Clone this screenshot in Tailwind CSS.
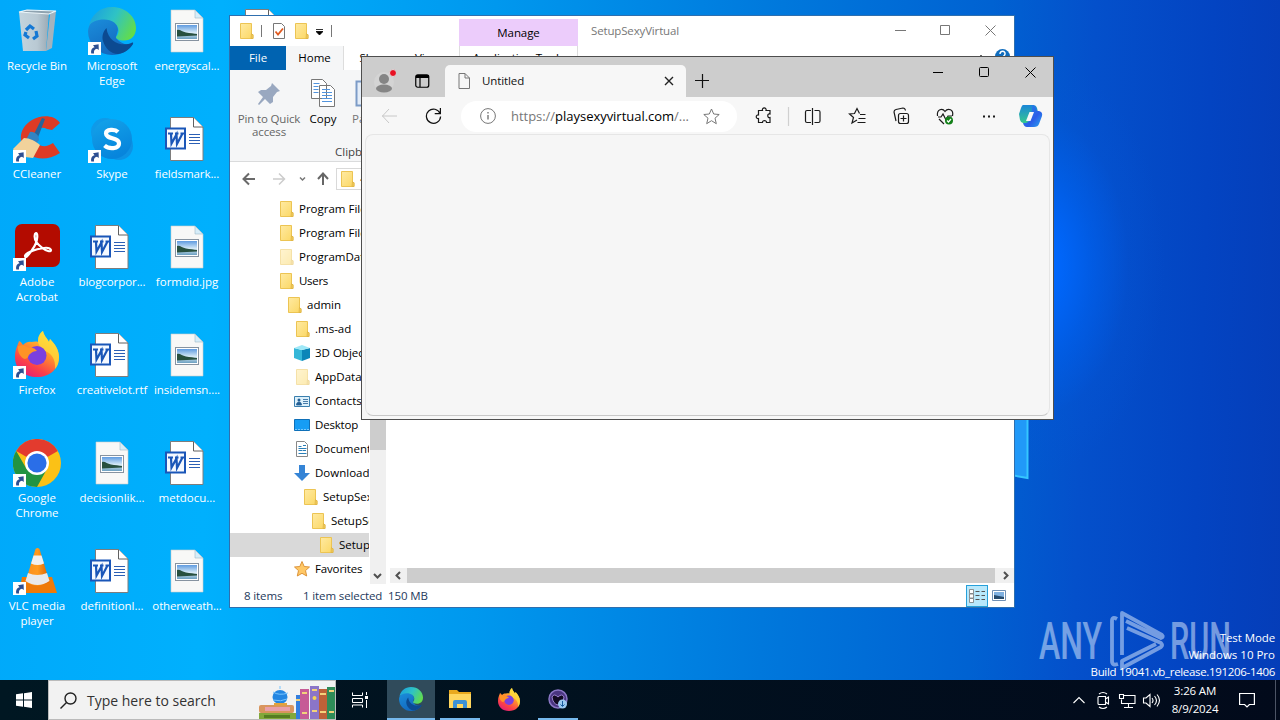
<!doctype html>
<html lang="en">
    <head>
        <meta charset="utf-8" />
        <script src="https://cdn.jsdelivr.net/npm/@tailwindcss/browser@4"></script>
        <title>Desktop</title>
    </head>

    <body class="w-[1280px] h-[720px] overflow-hidden font-['Open_Sans','Noto_Sans',sans-serif] text-[11.5px] text-black">
        <!-- shared icons -->
        <svg class="absolute w-0 h-0">
            <defs>
                <linearGradient id="gFolder" x1="0" y1="0" x2="1" y2="1">
                    <stop offset="0" stop-color="#ffeaa2" />
                    <stop offset="1" stop-color="#fbd763" />
                </linearGradient>
                <linearGradient id="gPhoto" x1="0" y1="0" x2="0" y2="1">
                    <stop offset="0" stop-color="#5f9be0" />
                    <stop offset="0.55" stop-color="#d8ebf7" />
                    <stop offset="1" stop-color="#6b9fc0" />
                </linearGradient>
                <linearGradient id="gEdgeTop" x1="0" y1="0.2" x2="1" y2="0.6">
                    <stop offset="0" stop-color="#1aa0e0" />
                    <stop offset="0.5" stop-color="#2fc3c4" />
                    <stop offset="1" stop-color="#62dc4c" />
                </linearGradient>
                <linearGradient id="gEdgeLeft" x1="0" y1="0" x2="0.6" y2="1">
                    <stop offset="0" stop-color="#1b8fdc" />
                    <stop offset="1" stop-color="#1266bd" />
                </linearGradient>
                <linearGradient id="gFox" x1="0.8" y1="0" x2="0.25" y2="1">
                    <stop offset="0" stop-color="#fff04a" />
                    <stop offset="0.4" stop-color="#ff9a2a" />
                    <stop offset="0.75" stop-color="#fb4148" />
                    <stop offset="1" stop-color="#e21d79" />
                </linearGradient>
                <linearGradient id="gSkype" x1="0" y1="0" x2="0.4" y2="1">
                    <stop offset="0" stop-color="#14a4ea" />
                    <stop offset="1" stop-color="#0785dc" />
                </linearGradient>
                <linearGradient id="gCone" x1="0" y1="0" x2="1" y2="0">
                    <stop offset="0" stop-color="#f98d1c" />
                    <stop offset="0.5" stop-color="#ff9a1e" />
                    <stop offset="1" stop-color="#d95f00" />
                </linearGradient>
                <linearGradient id="gBin" x1="0" y1="0" x2="1" y2="0">
                    <stop offset="0" stop-color="#c3d4de" />
                    <stop offset="0.6" stop-color="#b9c9d3" />
                    <stop offset="1" stop-color="#9aa9b4" />
                </linearGradient>
                <linearGradient id="gCop" x1="0" y1="0" x2="1" y2="1">
                    <stop offset="0" stop-color="#1f8fe8" />
                    <stop offset="0.6" stop-color="#2b5de8" />
                    <stop offset="1" stop-color="#2aa8f0" />
                </linearGradient>
                <linearGradient id="gCop2" x1="0" y1="0" x2="0" y2="1">
                    <stop offset="0" stop-color="#1a86d8" />
                    <stop offset="1" stop-color="#35c98f" />
                </linearGradient>
            </defs>
            <symbol id="folder" viewBox="0 0 14 16">
                <path d="M.5.500h11v11l1.500 0v4H.500z" fill="url(#gFolder)" stroke="#ecc453" />
                <path d="M11 15.500l.500-5 1.500 1.500v3.500z" fill="#f3cd5c" stroke="#dcb244" stroke-width=".7" />
            </symbol>
            <symbol id="shortcut" viewBox="0 0 13 13">
                <rect width="13" height="13" fill="#fff" />
                <path d="M3.300 11.500C2.600 8 4 5.700 6.600 5.200L5 3.200l5.600-.9.200 5.800-1.800-1.300C6.500 7.300 5.700 8.700 6 11.500z" fill="#2d4f92" />
            </symbol>
            <symbol id="photo" viewBox="0 0 48 48">
                <path d="M8 3h24l8 8v34H8z" fill="#f8f8f7" stroke="#c9cccd" stroke-width=".6" />
                <path d="M32 3v8h8z" fill="#d6edf9" stroke="#9fb8c6" stroke-width=".6" />
                <rect x="12.500" y="16.500" width="23" height="17" fill="#fff" stroke="#8793a0" />
                <rect x="14" y="18" width="20" height="14" fill="url(#gPhoto)" />
                <path d="M14 23c3-1 5 2 9 2.500s8 1 11 1.500v1.500l-20 1z" fill="#28503f" />
            </symbol>
            <symbol id="word" viewBox="0 0 48 48">
                <path d="M7.500 2.500h23l9.500 9.500v33.500H7.500z" fill="#fff" stroke="#7d7d7d" />
                <path d="M30.500 2.500v9.500H40" fill="#fff" stroke="#606060" />
                <path d="M26 19.500h11M26 22.500h11M26 25.500h11M26 28.500h11" stroke="#2b5fb5" />
                <rect x="3" y="13.500" width="19" height="20" fill="#f5f9ff" stroke="#1a56b8" stroke-width="2" />
                <path d="M5 18.500h5M8 19l.5 9.500 5-9 .5 9.500L19.500 18.500M12 18.500h3.500M17.500 18.500h4" fill="none" stroke="#1a56b8" stroke-width="2.200" />
            </symbol>
            <!-- the notch at the lower right is left open so any background shows through -->
            <symbol id="edge" viewBox="0 0 48 48">
                <path d="M24 48A24 24 0 0 1 0 24C1 15 8 10 16 11c8 0 14 5 14 12L28 30c2 5 10 9 17 7-5 7-12 11-21 11z" fill="url(#gEdgeLeft)" />
                <path d="M1 19C3 8 12 0 24 0c14 0 24 10 24 21 0 8-5 12.500-12 12.500-5 0-8-1.500-8-3 0-1.300 2.500-2.500 2.500-7C30.500 17 24 12.500 16 12.500 9 12.500 3 15 1 19z" fill="url(#gEdgeTop)" />
                <path d="M18.500 21c-3 3-5 8-3.500 13 2 7 8 13 15 13 7-1 12-5 15-10 .6-1.300-.4-1.700-1.300-1.200C35 40 20 36 18.500 21z" fill="#0c4a91" />
            </symbol>
            <symbol id="firefox" viewBox="0 0 48 48">
                <path d="M2 26C2 18 5 14 6 10c2 1 3 2.500 4 4 3-3 6-3.500 8-3 2 0 5-1 7 0C25 6 27 2 30 0c1 5 4 7 6 11l1-3c5 5 9 11 9 18 0 12-9 20-22 20S2 38 2 26z" fill="url(#gFox)" />
                <path d="M30 0c1 5 4 7 6 11l1-3c5 5 9 11 9 18 0 5-1 9-4 12 1-10-4-16-10-18-4-3-7-6-7-10 0-5 2-8 5-10z" fill="#ffdd3b" opacity=".75" />
                <circle cx="24" cy="24.500" r="9.500" fill="#7a3fe0" />
                <path d="M5 15c5-2 8 0 11 2 3-1 6 0 8 3-3 0-5 1-7 3-2 1-1 4-5 5-4-1-8-7-7-13z" fill="#ff9326" />
            </symbol>
        </svg>

        <div class="relative w-[1280px] h-[720px] overflow-hidden bg-[radial-gradient(ellipse_130px_210px_at_1035px_265px,#0068ff_12%,#0060eeaa_45%,#0456d844_72%,#0450cb00_100%),linear-gradient(92deg,#00a9fa_0%,#00b0fd_17%,#0098ee_38%,#0078dc_60%,#0062d2_76%,#0450cb_84%,#0344c2_93%,#053db8_100%)]">
            <!-- wallpaper glass pane -->
            <svg class="absolute left-[1000px] top-[400px] w-[40px] h-[90px]">
                <path d="M0 0h27.500v78L0 73z" fill="#2199f8" stroke="#35c6ff" stroke-width="2" />
            </svg>

            <!-- desktop shortcuts -->
            <div class="grid grid-flow-col grid-rows-[repeat(6,108px)] auto-cols-[75px] pt-[7px] -ml-[0.5px] w-[300px] text-center text-white text-[11.5px] leading-[15px]">
                <div class="flex flex-col items-center gap-[3px]">
                    <svg class="w-12 h-12 shrink-0" viewBox="0 0 48 48">
                        <path d="M6 5l30 1-3 38H10z" fill="url(#gBin)" />
                        <path d="M43 4l-6 3-4 37 6-3z" fill="#a4b3be" />
                        <path d="M6 5l8-2 29 1-7 3z" fill="#8fa3b0" stroke="#edf5f9" stroke-width="1.200" />
                        <path d="M13 23l4-4 4 3M23 24l1 5-4 3M16 31l-4-3 1-3" fill="none" stroke="#1478d4" stroke-width="3.200" />
                    </svg>
                    <span>Recycle Bin</span>
                </div>
                <div class="flex flex-col items-center gap-[3px]">
                    <svg class="w-12 h-12 shrink-0" viewBox="0 0 48 48">
                        <path d="M47 8C41-1 27 0 19 5 9 11 6 20 9 29c5 15 22 19 38 9l-7-10c-7 5-15 4-18-3-3-8 5-15 12-11l5 1z" fill="#dd3b25" />
                        <path d="M29 3l3 1-8 21-5-2z" fill="#25659c" />
                        <path d="M17 17c4-1 9 3 9 8l-4 5-9-5z" fill="#3384c2" />
                        <path d="M11 23c6 0 11 3 16 7L20 43 4 41 0 34z" fill="#f1d29b" />
                        <use href="#shortcut" y="35" width="13" height="13" />
                    </svg>
                    <span>CCleaner</span>
                </div>
                <div class="flex flex-col items-center gap-[3px]">
                    <svg class="w-12 h-12 shrink-0" viewBox="0 0 48 48">
                        <rect x="2" y="1" width="45" height="43" rx="7" fill="#b30b00" />
                        <path d="M12 33c0-4 24-12 26-6 0 5-19-6-16-16 3-4 4 7-3 16-4 6-7 9-7 6z" fill="none" stroke="#fff" stroke-width="2.200" />
                        <use href="#shortcut" y="35" width="13" height="13" />
                    </svg>
                    <span>Adobe<br />Acrobat</span>
                </div>
                <div class="flex flex-col items-center gap-[3px]">
                    <svg class="w-12 h-12 shrink-0" viewBox="0 0 48 48">
                        <use href="#firefox" width="48" height="48" />
                        <use href="#shortcut" y="35" width="13" height="13" />
                    </svg>
                    <span>Firefox</span>
                </div>
                <div class="flex flex-col items-center gap-[3px]">
                    <svg class="w-12 h-12 shrink-0" viewBox="0 0 48 48">
                        <circle cx="24" cy="24" r="24" fill="#fbc116" />
                        <path d="M24 24L3.200 12A24 24 0 0 1 44.800 12z" fill="#e33b2e" />
                        <path d="M3.200 12L13.600 30 34 30 24 48A24 24 0 0 1 3.200 12z" fill="#229342" />
                        <circle cx="24" cy="24" r="12" fill="#fff" />
                        <circle cx="24" cy="24" r="9.600" fill="#2a6ee8" />
                        <use href="#shortcut" y="35" width="13" height="13" />
                    </svg>
                    <span>Google<br />Chrome</span>
                </div>
                <div class="flex flex-col items-center gap-[3px]">
                    <svg class="w-12 h-12 shrink-0" viewBox="0 0 48 48">
                        <path d="M9 30h30l5 16H6z" fill="#ef7a08" />
                        <path d="M22.500 2q2-2 4 0l10 33q-12 7-24 0z" fill="url(#gCone)" />
                        <path d="M20.500 8.500h8l2.500 8q-6.500 3-13 0z" fill="#f0f0f0" />
                        <path d="M15 26q9 4 19 0l2.500 8q-12 8-24 0z" fill="#e9e9e9" />
                        <use href="#shortcut" y="35" width="13" height="13" />
                    </svg>
                    <span>VLC media<br />player</span>
                </div>

                <div class="flex flex-col items-center gap-[3px]">
                    <svg class="w-12 h-12 shrink-0" viewBox="0 0 48 48">
                        <use href="#edge" width="48" height="48" />
                        <use href="#shortcut" y="35" width="13" height="13" />
                    </svg>
                    <span>Microsoft<br />Edge</span>
                </div>
                <div class="flex flex-col items-center gap-[3px]">
                    <svg class="w-12 h-12 shrink-0" viewBox="0 0 48 48">
                        <circle cx="17" cy="17" r="14" fill="#0f9ae8" />
                        <circle cx="31" cy="31" r="14" fill="#0d92e4" />
                        <circle cx="24" cy="24" r="20" fill="url(#gSkype)" />
                        <path d="M30 17c-3-3-12-3-12 1.500 0 6 13 3.500 13 10 0 5.500-10 6-14.500 2" fill="none" stroke="#fff" stroke-width="4.200" />
                        <use href="#shortcut" y="35" width="13" height="13" />
                    </svg>
                    <span>Skype</span>
                </div>
                <div class="flex flex-col items-center gap-[3px]">
                    <svg class="w-12 h-12 shrink-0"><use href="#word" /></svg>
                    <span class="tracking-[-0.08px]">blogcorpor...</span>
                </div>
                <div class="flex flex-col items-center gap-[3px]">
                    <svg class="w-12 h-12 shrink-0"><use href="#word" /></svg>
                    <span class="tracking-[-0.1px]">creativelot.rtf</span>
                </div>
                <div class="flex flex-col items-center gap-[3px]">
                    <svg class="w-12 h-12 shrink-0"><use href="#photo" /></svg>
                    <span>decisionlik...</span>
                </div>
                <div class="flex flex-col items-center gap-[3px]">
                    <svg class="w-12 h-12 shrink-0"><use href="#word" /></svg>
                    <span>definitionl...</span>
                </div>

                <div class="flex flex-col items-center gap-[3px]">
                    <svg class="w-12 h-12 shrink-0"><use href="#photo" /></svg>
                    <span class="tracking-[-0.08px]">energyscal...</span>
                </div>
                <div class="flex flex-col items-center gap-[3px]">
                    <svg class="w-12 h-12 shrink-0"><use href="#word" /></svg>
                    <span class="tracking-[-0.08px]">fieldsmark...</span>
                </div>
                <div class="flex flex-col items-center gap-[3px]">
                    <svg class="w-12 h-12 shrink-0"><use href="#photo" /></svg>
                    <span>formdid.jpg</span>
                </div>
                <div class="flex flex-col items-center gap-[3px]">
                    <svg class="w-12 h-12 shrink-0"><use href="#photo" /></svg>
                    <span class="tracking-[-0.08px]">insidemsn....</span>
                </div>
                <div class="flex flex-col items-center gap-[3px]">
                    <svg class="w-12 h-12 shrink-0"><use href="#word" /></svg>
                    <span>metdocu...</span>
                </div>
                <div class="flex flex-col items-center gap-[3px]">
                    <svg class="w-12 h-12 shrink-0"><use href="#photo" /></svg>
                    <span class="tracking-[-0.15px]">otherweath...</span>
                </div>

                <div class="flex flex-col items-center">
                    <svg class="w-12 h-12 shrink-0"><use href="#word" /></svg>
                </div>
            </div>

            <!-- file explorer window -->
            <div class="absolute left-[229px] top-[15px] w-[786px] h-[593px] flex flex-col bg-white border border-[#2f6fae] overflow-hidden whitespace-nowrap">
                <div class="flex h-[30px] shrink-0">
                    <div class="w-[229px] flex items-center pl-[10px] pb-px">
                        <svg class="w-[14px] h-4"><use href="#folder" /></svg>
                        <i class="w-px h-3 bg-[#777] ml-[7px]"></i>
                        <svg class="w-3 h-4 ml-[11px]" viewBox="0 0 12 16" fill="none">
                            <path d="M.5.500h8l3 3v12H.500z" fill="#fff" stroke="#777" />
                            <path d="M2.500 8.500L5 11.500l5-6" stroke="#e05a20" stroke-width="1.800" />
                        </svg>
                        <svg class="w-[14px] h-4 ml-[10px]"><use href="#folder" /></svg>
                        <svg class="w-[7px] h-[6px] ml-[7px] mt-0.5" viewBox="0 0 7 6"><path d="M0 .5h7M0 2.500h7L3.500 6z" stroke="#000" stroke-width=".8" /></svg>
                        <i class="w-px h-3 bg-[#777] ml-2"></i>
                    </div>
                    <div class="w-[119px] mt-[3px] h-[27px] bg-[#ecccfb] text-center leading-[28px] text-[11.5px] tracking-[-0.1px]">Manage</div>
                    <div class="pl-[13px] leading-[30px] text-[#777] tracking-[-0.15px]">SetupSexyVirtual</div>
                    <div class="ml-auto flex items-center gap-[34px] pr-[18px] pb-px text-[#777]">
                        <svg class="w-[11px] h-[11px]" viewBox="0 0 11 11"><path d="M0 5.500h11" stroke="currentColor" /></svg>
                        <svg class="w-[11px] h-[11px]" viewBox="0 0 11 11"><path d="M.5.500h9v9h-9z" fill="none" stroke="currentColor" /></svg>
                        <svg class="w-[11px] h-[11px]" viewBox="0 0 11 11"><path d="M.5.500l10 10m0-10l-10 10" stroke="currentColor" /></svg>
                    </div>
                </div>
                <div class="flex h-6 shrink-0 leading-6 text-center">
                    <div class="w-14 bg-[#0063b1] text-white">File</div>
                    <div class="w-[58px] bg-[#f5f6f7] border-r border-[#ddd]">Home</div>
                    <div class="w-[56px] pl-1.5">Share</div>
                    <div class="w-[59px] pr-1">View</div>
                    <div class="w-[119px] border-x border-[#ddd]">Application Tools</div>
                    <svg class="ml-auto w-10 h-6" viewBox="0 0 40 24">
                        <path d="M3 13l4-4 4 4" fill="none" stroke="#666" />
                        <circle cx="28.500" cy="10.500" r="7.500" fill="#0f6cbd" />
                        <path d="M26 8c0-4 5.500-3.500 5 0 0 2-2.500 2-2.500 4" fill="none" stroke="#fff" stroke-width="1.500" />
                    </svg>
                </div>
                <div class="flex h-[92px] shrink-0 bg-[#f5f6f7] border-b border-[#dadbdc] leading-[13px]">
                    <div class="w-[78px] pt-[10px] flex flex-col items-center text-center text-[#666] tracking-[-0.15px]">
                        <svg class="w-8 h-8" viewBox="0 0 32 32"><path d="M19 3l8 8-3 1-4 5 0 5-3 2-5-5-6 6-1-1 5-7-5-5 3-2h5l5-4z" fill="#99a8c0" /></svg>
                        <span>Pin to Quick<br />access</span>
                    </div>
                    <div class="w-[30px] pt-[7px] flex flex-col items-center">
                        <svg class="w-8 h-8 shrink-0" viewBox="0 0 32 32" fill="none">
                            <path d="M4.500 2.500h11l4 4v15h-15zM12.500 8.500h11l4 4v17h-15z" fill="#fff" stroke="#777" />
                            <path d="M6.500 6.500h6M6.500 9.500h5M6.500 12.500h5M6.500 15.500h5M15 12.500h8M15 15.500h10M15 18.500h10M15 21.500h10M15 24.500h10" stroke="#5294dd" />
                        </svg>
                        <span class="mt-[3px]">Copy</span>
                    </div>
                    <div class="pl-[14px] pt-[7px]">
                        <svg class="w-8 h-8" viewBox="0 0 32 32"><rect x="4.500" y="4.500" width="22" height="24" fill="#e4edf8" stroke="#7c9bc7" stroke-width="2" /></svg>
                        <div class="mt-[3px] text-[#777]">Paste</div>
                        <div class="mt-[20px] -ml-[17px] text-[#444]">Clipboard</div>
                    </div>
                </div>
                <div class="flex items-center h-[34px] shrink-0 pl-[12px]">
                    <svg class="w-[90px] h-4" viewBox="0 0 90 16" fill="none" stroke-width="2">
                        <path d="M1 8h12M7 2.500L1.500 8 7 13.500" stroke="#6a6a6a" />
                        <path d="M31 8h12M37 2.500L42.500 8 37 13.500" stroke="#ccc" stroke-width="1.500" />
                        <path d="M58 6.500l2.500 2.500L63 6.500" stroke="#777" stroke-width="1.500" />
                        <path d="M81 14V3M76 8l5-5.500L86 8" stroke="#666" />
                    </svg>
                    <div class="ml-[4px] flex items-center gap-[5px] w-[200px] h-[22px] border border-[#d9d9d9] pl-1">
                        <svg class="w-[14px] h-4"><use href="#folder" /></svg>
                        <span>«</span>
                    </div>
                </div>

                <div class="flex flex-1 min-h-0">
                    <!-- folder tree -->
                    <div class="w-[139px] pt-px overflow-hidden leading-6 [&>div]:flex [&>div]:items-center [&>div]:h-6 [&>div]:gap-[5px] [&_svg]:shrink-0">
                        <div class="pl-[50px]"><svg class="w-[14px] h-4"><use href="#folder" /></svg>Program Files</div>
                        <div class="pl-[50px]"><svg class="w-[14px] h-4"><use href="#folder" /></svg>Program Files (x86)</div>
                        <div class="pl-[50px]"><svg class="w-[14px] h-4 opacity-50"><use href="#folder" /></svg>ProgramData</div>
                        <div class="pl-[50px] tracking-[-0.3px]"><svg class="w-[14px] h-4"><use href="#folder" /></svg>Users</div>
                        <div class="pl-[58px]"><svg class="w-[14px] h-4"><use href="#folder" /></svg>admin</div>
                        <div class="pl-[66px]"><svg class="w-[14px] h-4"><use href="#folder" /></svg>.ms-ad</div>
                        <div class="pl-[64px]">
                            <svg class="w-4 h-4" viewBox="0 0 16 16"><path d="M0 3l8 2v11l-8-3z" fill="#35b7d8" /><path d="M16 3L8 5v11l8-3z" fill="#0c86b8" /><path d="M0 3l8-3 8 3-8 2z" fill="#9fe8f7" /></svg>3D Objects
                        </div>
                        <div class="pl-[66px]"><svg class="w-[14px] h-4 opacity-50"><use href="#folder" /></svg>AppData</div>
                        <div class="pl-[64px]">
                            <svg class="w-4 h-4" viewBox="0 0 16 16"><path d="M.5 3.500h15v10H.500z" fill="#dcf0fb" stroke="#3a7fae" /><circle cx="5" cy="7" r="1.500" fill="#235f95" /><path d="M2.500 12c0-4 5-4 5 0zM9 6.500h5M9 8.500h5M9 10.500h5" fill="#235f95" stroke="#235f95" stroke-width=".8" /></svg>Contacts
                        </div>
                        <div class="pl-[64px] tracking-[-0.2px]">
                            <svg class="w-4 h-4" viewBox="0 0 16 16"><path d="M.5 2.500h15v11H.500z" fill="#169df5" stroke="#0f70b8" /><path d="M1 12.500h14" stroke="#7cc8fa" stroke-dasharray="2 1" /></svg>Desktop
                        </div>
                        <div class="pl-[64px]">
                            <svg class="w-4 h-4" viewBox="0 0 16 16"><path d="M2.500.500h8l3 3v12h-11z" fill="#fff" stroke="#888" /><path d="M4.500 5.500h3M9 4.500h3M4.500 7.500h8M4.500 9.500h4M9 9.500h3M4.500 12.500h8" stroke="#2a7fb8" /></svg>Documents
                        </div>
                        <div class="pl-[64px]">
                            <svg class="w-4 h-4" viewBox="0 0 16 16"><path d="M5 0h6v8h5l-8 8-8-8h5z" fill="#3584d6" /></svg>Downloads
                        </div>
                        <div class="pl-[74px]"><svg class="w-[14px] h-4"><use href="#folder" /></svg>SetupSexyVirtual</div>
                        <div class="pl-[82px]"><svg class="w-[14px] h-4"><use href="#folder" /></svg>SetupSexyVirtual</div>
                        <div class="pl-[90px] bg-[#d9d9d9]"><svg class="w-[14px] h-4"><use href="#folder" /></svg>SetupSexyVirtual</div>
                        <div class="pl-[64px] tracking-[-0.15px]">
                            <svg class="w-4 h-4" viewBox="0 0 16 16"><path d="M8 .500l2.200 5 5.300.500-4 3.600 1.200 5.400L8 12.300 3.300 15l1.200-5.400-4-3.600 5.300-.500z" fill="#ffc866" stroke="#dc9339" /></svg>Favorites
                        </div>
                    </div>
                    <div class="w-[17px] flex flex-col justify-between items-center bg-[#f0f0f0] border-l border-white">
                        <div class="w-4 h-[254px] bg-[#cdcdcd]"></div>
                        <svg class="w-[9px] h-[16px] mr-0.5" viewBox="0 0 9 16"><path d="M1 6L4.500 9.500 8 6" fill="none" stroke="#505050" stroke-width="2" /></svg>
                    </div>
                    <!-- file list, empty apart from its scrollbar -->
                    <div class="flex-1 flex flex-col justify-end pl-1">
                        <div class="flex items-center h-[15px] mb-px bg-[#f0f0f0]">
                            <svg class="w-[17px] h-[9px]" viewBox="0 0 17 9"><path d="M10 1L6.500 4.500 10 8" fill="none" stroke="#505050" stroke-width="2" /></svg>
                            <div class="flex-1 h-full bg-[#cdcdcd]"></div>
                            <svg class="w-[19px] h-[9px]" viewBox="0 0 19 9"><path d="M9 1l3.500 3.500L9 8" fill="none" stroke="#505050" stroke-width="2" /></svg>
                        </div>
                    </div>
                </div>

                <div class="flex items-center h-[23px] shrink-0 pl-[14px] text-[#1e395b] tracking-[-0.12px]">
                    <span class="w-[59px]">8 items</span>
                    <span class="w-[85px]">1 item selected</span>
                    <span>150 MB</span>
                    <div class="ml-auto w-[22px] h-[22px] flex items-center justify-center bg-[#b8e8fb] border border-[#26a0da]">
                        <svg class="w-4 h-3.5" viewBox="0 0 16 14" fill="none">
                            <path d="M.5.500h4v4h-4zM.500 5h4v4h-4zM.500 9.500h4v4h-4z" fill="#fff" stroke="#777" stroke-width=".8" />
                            <path d="M6.500 2.500h4m2 0h3.500M6.500 6.500h4m2 0h3.500M6.500 10.500h4m2 0h3.500" stroke="#555" />
                        </svg>
                    </div>
                    <svg class="w-[14px] h-[11px] ml-1 mr-2" viewBox="0 0 14 11"><path d="M.5.500h13v10H.500z" fill="#fff" stroke="#7090b5" /><path d="M2 2h10v7H2z" fill="#7fb0e0" /><path d="M2 5l10 2v2H2z" fill="#254a6c" /></svg>
                </div>
            </div>

            <!-- browser window -->
            <div class="absolute left-[361px] top-[56px] w-[693px] h-[364px] flex flex-col bg-[#f7f7f7] border border-[#4e4e4e] whitespace-nowrap text-[#111]">
                <div class="flex h-10 shrink-0 bg-[#cdcdcd]">
                    <div class="w-[83px] flex items-center pl-3">
                        <svg class="w-[22px] h-6 mt-2" viewBox="0 0 22 24">
                            <circle cx="10" cy="13" r="10" fill="#d4d4d4" />
                            <circle cx="10" cy="10" r="5" fill="#858585" />
                            <ellipse cx="10" cy="19.500" rx="8" ry="4" fill="#858585" />
                            <circle cx="19" cy="4" r="3.500" fill="#e81123" stroke="#ddd" />
                        </svg>
                        <svg class="w-[15px] h-[14px] ml-[19px] mt-2" viewBox="0 0 15 14" fill="none"><rect x=".75" y=".75" width="13" height="12.500" rx="2" stroke="#000" stroke-width="1.200" /><path d="M1 2.500h13" stroke="#000" stroke-width="3" /><path d="M5 3v10" stroke="#000" stroke-width="1.200" /></svg>
                    </div>
                    <div class="w-[241px] mt-[8px] pb-px flex items-center pl-[13px] pr-[12px] rounded-t-[5px] bg-[#f7f7f7]">
                        <svg class="w-3 h-4" viewBox="0 0 12 16" fill="none" stroke="#777"><path d="M1 .5h6l4.500 4.500v10.500H1zM7 .5v4.500h4.500" /></svg>
                        <span class="ml-3 tracking-[-0.1px]">Untitled</span>
                        <svg class="ml-auto w-[10px] h-[10px] mt-px" viewBox="0 0 10 10"><path d="M1 1l8 8m0-8L1 9" stroke="#222" stroke-width="1.400" /></svg>
                    </div>
                    <svg class="w-[14px] h-[14px] ml-[9px] mt-[17px]" viewBox="0 0 14 14"><path d="M0 6.500h14M7.500 0v14" stroke="#111" stroke-width="1.200" /></svg>
                    <div class="ml-auto flex gap-[36px] pr-[17px] pt-[10px]">
                        <svg class="w-[10px] h-[11px]" viewBox="0 0 10 11"><path d="M0 5.500h10" stroke="#000" /></svg>
                        <svg class="w-[10px] h-[11px]" viewBox="0 0 10 11"><rect x=".5" y=".5" width="9" height="9" rx="1" fill="none" stroke="#000" /></svg>
                        <svg class="w-[11px] h-[11px]" viewBox="0 0 11 11"><path d="M.5.500l10 10m0-10l-10 10" stroke="#000" /></svg>
                    </div>
                </div>
                <div class="flex items-center h-[38px] shrink-0 pl-[20px]">
                    <svg class="w-4 h-4 mb-px" viewBox="0 0 16 16" fill="none" stroke="#c8c8c8"><path d="M0 8h15M7 1L.500 8 7 15" /></svg>
                    <svg class="w-[17px] h-[17px] ml-[27px] mb-px" viewBox="0 0 18 18" fill="none" stroke="#111" stroke-width="1.300"><path d="M16 7A7.500 7.500 0 1 0 16.500 10M16.300 1v6h-6" /></svg>
                    <div class="ml-[19px] w-[276px] h-[31px] rounded-full bg-white flex items-center pl-[19px] pr-[17px]">
                        <svg class="w-4 h-4" viewBox="0 0 16 16" fill="none" stroke="#777"><circle cx="8" cy="8" r="7.400" /><path d="M8 7v4.500M8 4v1.500" stroke-width="1.400" /></svg>
                        <span class="ml-[15px] mt-px text-[13px] tracking-[-0.03px] text-[#777]">https://<span class="text-black">playsexyvirtual.com</span>/...</span>
                        <svg class="ml-auto w-[17px] h-[17px]" viewBox="0 0 17 17" fill="none" stroke="#777"><path d="M8.500 1l2.200 5 5.500.500-4.200 3.700 1.300 5.500-4.800-3-4.800 3L5 10.200.800 6.500l5.500-.500z" /></svg>
                    </div>
                    <svg class="w-[304px] h-7 ml-[10px]" viewBox="747 102 304 28" fill="none" stroke="#1b1b1b" stroke-width="1.200">
                        <path d="M760 110.500h2.500c-1-3.500 4.500-3.500 3.500 0h4v3.500c-3-1-3 4.500 0 3.500v5h-3.500c.5-2.500-4.500-2.500-4 0h-4v-4c-3 .5-3-4 0-3.500v-4.500z" />
                        <path d="M788.500 107v19" stroke="#d0d0d0" />
                        <path d="M811 110.500h-4q-1.500 0-1.500 1.500v9q0 1.500 1.500 1.500h4M814.500 110.500h4q1.500 0 1.500 1.500v9q0 1.500-1.500 1.500h-4M812.500 108v17" />
                        <path d="M859.500 113.500l-2.500-5-2.500 5-5 .5 4 3.500-1.500 5.500 5-3M860 114.500h5.500M858.500 118.500h7M857.500 122.500h8" />
                        <rect x="898.500" y="113.500" width="10" height="10" rx="2" />
                        <path d="M903.500 115.500v6M900.500 118.500h6M896 121l-2-9q0-2 2-2.500l7-1.500q2 0 2.500 2.500" />
                        <path d="M937.500 116c-1-7 5-8 7.500-4.500 3-4 9-2 7.500 4.500M938 117h3l2-3 3 6 2-4h4M939 119l5 5" />
                        <circle cx="949" cy="120.500" r="4" fill="#138019" stroke="none" />
                        <path d="M947 120.500l1.500 1.500 2.500-3" stroke="#fff" />
                        <path d="M983 116.500h2m3 0h2m3 0h2" stroke-width="2" />
                        <path d="M1023 105h10q3 0 4 3l1 4h-6l-4 11h-5q-2 0-3-3l-1-6 2-6q1-3 2-3z" fill="url(#gCop2)" stroke="none" />
                        <path d="M1032 105q3 0 4 4l1 2h2q4 1 3 5l-3 8q-1 3-5 3h-7q-3 0-4-4h3q2 0 3-3l3-10z" fill="url(#gCop)" stroke="none" />
                        <path d="M1029.500 112h4.500l-3.500 9h-4.500z" fill="#f7f7f7" stroke="none" />
                    </svg>
                </div>
                <div class="flex-1 mx-[3px] -mt-px mb-[3px] rounded-lg border border-[#e6e6e6] border-b-[#c8c8c8] bg-[#f6f6f6]"></div>
            </div>

            <!-- watermark -->
            <svg class="absolute left-[1036px] top-[606px] w-[200px] h-[66px] opacity-50" viewBox="1036 606 200 66" fill="#e4f0ff">
                <text x="1039" y="659" font-family="Roboto" font-size="52" font-weight="500" textLength="63" lengthAdjust="spacingAndGlyphs">ANY</text>
                <text x="1170" y="659" font-family="Roboto" font-size="52" font-weight="500" textLength="61" lengthAdjust="spacingAndGlyphs">RUN</text>
                <g fill="none" stroke="#e4f0ff" stroke-width="3.800" stroke-linejoin="round">
                    <path d="M1117 619q-5-3-5 2v40q0 5 6 3" />
                    <path d="M1122 655v-42l40 22q2 2-1 3l-35-17" />
                    <path d="M1127 628l34 15q2 2 0 4l-39 21v-7l34-17" />
                </g>
            </svg>
            <div class="absolute right-[5px] top-[629px] text-right text-white text-[11.5px] leading-[17px]">
                <span class="tracking-[-0.1px]">Test Mode</span><br />Windows 10 Pro<br /><span class="tracking-[-0.32px]">Build 19041.vb_release.191206-1406</span>
            </div>

            <!-- taskbar -->
            <div class="absolute left-0 bottom-0 w-[1280px] h-10 flex items-center bg-linear-to-r from-[#001722] to-[#020a1b] text-white">
                <div class="w-12 flex justify-center">
                    <svg class="w-4 h-4" viewBox="0 0 16 16"><path d="M0 2.300l7-1v6.200H0zM8 1.200L16 0v7.500H8zM0 8.500h7v6.200l-7-1zM8 8.500h8V16l-8-1.200z" fill="#fff" /></svg>
                </div>
                <div class="w-72 h-10 flex items-center pl-[11px] bg-[#f2f2f2] border border-[#bbb] text-[#333]">
                    <svg class="w-[17px] h-[17px]" viewBox="0 0 17 17" fill="none" stroke="#222" stroke-width="1.400"><circle cx="10.500" cy="6.500" r="5.500" /><path d="M6.500 10.500L.500 16.500" /></svg>
                    <span class="ml-[10px] text-[14px]">Type here to search</span>
                    <svg class="ml-auto w-[77px] h-[38px]" viewBox="0 0 77 38">
                        <rect x="1" y="24" width="35" height="8" rx="2" fill="#d9955e" /><rect x="7" y="26" width="25" height="4" fill="#e99faa" />
                        <rect x="1" y="32" width="37" height="6" fill="#82a83a" /><rect x="6" y="34" width="26" height="3" fill="#557d22" />
                        <ellipse cx="22" cy="16" rx="7.500" ry="7" fill="#2386e2" /><path d="M15 11q6 4 15 1M15 19q8 2 14-1M22 8v-3" stroke="#78c5ff" fill="none" /><rect x="16" y="22" width="13" height="2.500" fill="#e2a33d" />
                        <rect x="38" y="14" width="5" height="24" fill="#337ede" /><rect x="42" y="8" width="9" height="30" fill="#c65b96" /><rect x="52" y="5" width="9" height="33" fill="#8b75c8" /><rect x="61" y="8" width="8" height="30" fill="#bd6138" /><rect x="69" y="6" width="8" height="32" fill="#2e8c58" />
                        <path d="M44 12h5M44 32h5M54 9h5M54 30h5M62 13h6M62 31h6M71 10h5M71 31h5M38 19h4" stroke="#f3d27b" stroke-width="2" /><circle cx="56.500" cy="17" r="2" fill="#f5d454" />
                    </svg>
                </div>
                <div class="w-[51px] flex justify-center pr-0.5">
                    <svg class="w-[17px] h-4" viewBox="0 0 17 16" fill="none" stroke="#fff"><path d="M.5 3.500V1M.5.500v3h10v-3M.500 6.500h10v4H.500zM.500 15.500v-2.500h10v2.500M14.500 0v3M14.500 8v8" /><rect x="13.500" y="4.500" width="2" height="2" fill="#fff" /></svg>
                </div>
                <div class="w-12 h-10 bg-[#304b5b] border-b-2 border-[#76b9ed] flex items-center justify-center">
                    <svg class="w-6 h-6"><use href="#edge" /></svg>
                </div>
                <div class="ml-[5px] w-10 h-10 border-b-2 border-[#76b9ed] flex items-center justify-center">
                    <svg class="w-[22px] h-[18px]" viewBox="0 0 22 18"><path d="M0 0h8l2 2h12v16H0z" fill="#e9a91e" /><path d="M0 4h22v14H0z" fill="#ffd65e" /><path d="M4 18v-6q0-2 2-2h10q2 0 2 2v6h-4v-4H8v4z" fill="#3c91d5" /></svg>
                </div>
                <svg class="ml-[17px] w-6 h-6"><use href="#firefox" /></svg>
                <div class="ml-[17px] w-10 h-10 border-b-2 border-[#76b9ed] flex items-center justify-center">
                    <svg class="w-5 h-5" viewBox="0 0 20 20"><circle cx="10" cy="10" r="9" fill="#4a3580" stroke="#8a76c4" stroke-width="1.500" /><path d="M4 8q2-4 6 0 4-4 6 0-1 7-6 8-5-1-6-8z" fill="#110a21" stroke="#9b82cf" /><circle cx="14.500" cy="15" r="4.500" fill="#9dcaf0" /><path d="M14.500 12v5m-2-1.500l2 2 2-2" fill="none" stroke="#175a9d" /></svg>
                </div>
                <svg class="ml-auto w-[92px] h-6" viewBox="1070 688 92 24" fill="none" stroke="#fff" stroke-width="1.100">
                    <path d="M1073.500 703l5.500-5.500 5.500 5.500" />
                    <path d="M1099 696.500h6.500v8h-6.500q-1 0-1-1v-6q0-1 1-1zM1105.500 699l3-2v7l-3-2M1099 694q4-3 8 0M1099 707q4 3 8 0" />
                    <path d="M1124 695.500h11v8h-13.500v-4M1119.500 694.500h4v4h-4zM1128.500 703.500v4M1124 707.500h9" />
                    <path d="M1143.500 698h2.500l4-3.500v12l-4-3.500h-2.500zM1152 698q2 2.500 0 5M1154.500 696q4 4.500 0 9M1157 694.500q5 5.500 0 12" />
                </svg>
                <div class="w-[66px] text-center text-[11.5px] leading-[18px] tracking-[-0.15px]">3:26 AM<br />8/9/2024</div>
                <svg class="ml-[11px] w-4 h-4" viewBox="0 0 16 16" fill="none" stroke="#fff" stroke-width="1.200"><path d="M.600 1.500h14.800v11h-5L8 15l-2.400-2.500h-5z" /></svg>
                <div class="ml-[20px] w-px h-10 bg-[#4c5465] mr-[4px]"></div>
            </div>
        </div>
    </body>
</html>
